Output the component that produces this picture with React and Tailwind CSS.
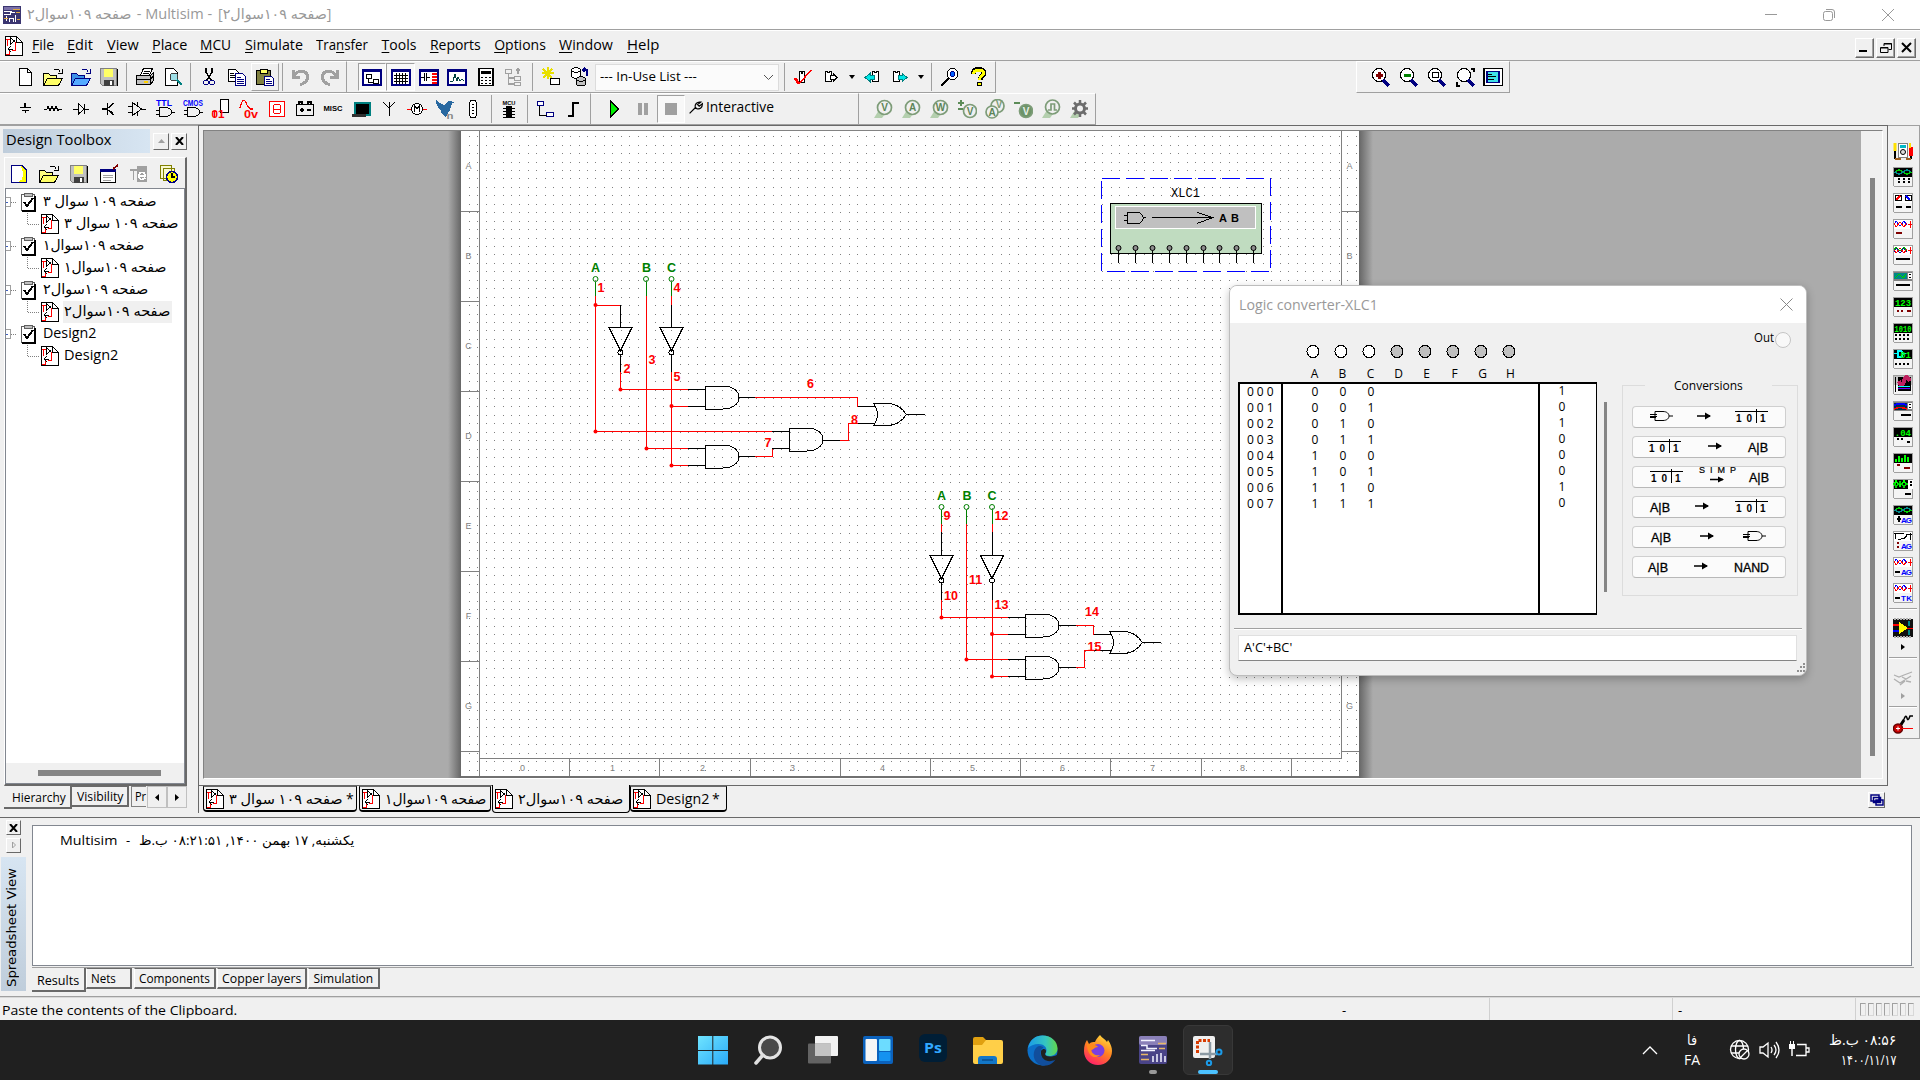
import React, { useLayoutEffect, useRef, useState } from "react";

const K = "#000", N = "#000080", R = "#f00", G = "#a0a0a0", Y = "#ffff00";

/* Text squeezed or stretched horizontally to a given width */
function T({ w, children, className = "", dir = "ltr" }) {
  const ref = useRef(null);
  const [s, setS] = useState(1);
  useLayoutEffect(() => {
    const n = ref.current.offsetWidth;
    if (n) setS(w / n);
  }, [w, children]);
  return (
    <span className={"inline-block shrink-0 whitespace-nowrap text-left " + className} style={{ width: w }} dir="ltr">
      <span ref={ref} dir={dir} className="inline-block origin-left whitespace-pre" style={{ transform: `scaleX(${s})` }}>
        {children}
      </span>
    </span>
  );
}

/* Icon from a list of [path, stroke, fill, strokeWidth] */
function Ic({ d, t, s = 20, smooth, className = "" }) {
  return (
    <svg width={s} height={s} viewBox="0 0 20 20" overflow="visible" className={"shrink-0 overflow-visible " + className} shapeRendering={smooth ? "auto" : "crispEdges"}>
      {d.map(([p, st, f, sw], i) => (
        <path key={i} d={p} stroke={st || "none"} fill={f || "none"} strokeWidth={sw || 1} />
      ))}
      {(t || []).map(([x, y, sz, c, v, len], i) => (
        <text key={i} x={x} y={y} fontSize={sz} fill={c} fontFamily="Liberation Sans" fontWeight="bold" textAnchor="middle" textLength={len} lengthAdjust="spacingAndGlyphs">{v}</text>
      ))}
    </svg>
  );
}

const circ = (x, y, r) => `M${x - r} ${y}a${r} ${r} 0 1 0 ${2 * r} 0a${r} ${r} 0 1 0 ${-2 * r} 0`;

const A = {
  newf: [["M4.5 1.5h8l4 4v13h-12z", K, "#fff"], ["M12.5 1.5v4h4", K]],
  open: [["M.5 18.5V6.5h5l2 2h6v3", K, "#ffff80"], ["M.5 18.5l4-7h15l-4 7z", K, "#ffff66"], ["M11 3c3-2 5-1 6 2m2-3v4h-4", K]],
  openb: [["M.5 18.5V6.5h5l2 2h6v3", N, "#3c90e8"], ["M.5 18.5l4-7h15l-4 7z", N, "#55aaff"], ["M11 3c3-2 5-1 6 2m2-3v4h-4", N]],
  save: [["M1.5 1.5h16v17h-14l-2-2z", "#808080", "#c0c0c0"], ["M5 2h9v8h-9z", "", "#ffff66"], ["M5 13h10v6h-10z", "", "#404040"], ["M11 14h2v4h-2z", "", "#fff"], ["M18.5 2v17", K]],
  print: [["M5.5 8l3-6.5h9l-3 6.5", K, "#fff"], ["M9 4h6M8 6h6", K], ["M1.5 8.5h14l3-3v8l-3 4h-14z", K, "#c0c0c0"], ["M1.5 12.5h14v-4m0 9v-5l3-4", K], ["M9 14h4v2h-4z", "", "#ffd000"]],
  prev: [["M2.5 1.5h8l4 4v13h-12z", K, "#fff"], [circ(11, 10, 4), "#404040", "#9fe0e8"], ["M14 13l5 5", "#008080", "", 2.5]],
  cut: [["M7 1v4l5 8M13 1v4l-5 8", K, "", 1.5], [circ(7, 15.5, 2.5), N, ""], [circ(13, 15.5, 2.5), N, ""]],
  copy: [["M1.5 2.5h7l3 3v9h-10z", K, "#fff"], ["M3 6h4M3 8h6M3 10h6", K], ["M8.5 6.5h7l3 3v9h-10z", N, "#fff"], ["M10 10h4M10 12h7M10 14h7M10 16h7", N]],
  paste: [["M1.5 3.5h14v14h-14z", K, "#808040"], ["M5 2h7v4h-7z", K, "#ffff66"], ["M9.5 9.5h7l2 2v7h-9z", N, "#fff"], ["M11 12h4M11 14h6M11 16h6", N]],
  undo: [["M2 3v7h7M3 9c3-6 10-6 13-2c2 5-1 9-7 11", G, "", 3]],
  redo: [["M18 3v7h-7M17 9c-3-6-10-6-13-2c-2 5 1 9 7 11", G, "", 3]],
  w1: [["M1 2.5h18v15h-18z", N, "#fff", 2], ["M0 2h20v3h-20z", "", N], ["M4.5 7.5h5v4h-5zM11.5 12.5h5v4h-5zM6.500 12v3h4", K]],
  w2: [["M1 2.5h18v15h-18z", N, "#fff", 2], ["M0 2h20v3h-20z", "", N], ["M3 8.500h14M3 11.500h14M3 14.500h14M5.500 6v11M8.500 6v11M11.500 6v11M14.500 6v11", K]],
  w3: [["M1 2.5h18v15h-18z", N, "#fff", 2], ["M0 2h20v3h-20z", "", N], ["M2 10h3M5.500 6v8M7.500 6v8M8 10h3", K], ["M13 7h5M13 10h5M13 13h5M13 16h5", R, "", 2]],
  w4: [["M1 2.5h18v15h-18z", N, "#fff", 2], ["M0 2h20v3h-20z", "", N], ["M3 14h3l2-7l2 7l1-4l2 4l2-2l2 2", "#004040"]],
  calc: [["M3 1.500h14v17h-14z", K, "#fff", 1.500], ["M5 4h10v3h-10z", "", K], ["M5 10h2M9 10h2M13 10h2M5 13h2M9 13h2M13 13h2M5 16h2M9 16h2M13 16h2", K, "", 1]],
  hier: [["M1.5 2.500h6v4h-6zM10.500 9.500h6v4h-6zM10.500 15.500h6v3h-6zM4.500 7v10h6M4.500 11h6M14 7v-5M12 4l2-2l2 2", G, "", 1.5]],
  star: [["M7 0v12M1 6h12M2 2l9 9M11 2l-9 9", "#e8e000", "", 1.5], ["M9.500 11.500h9v6h-9z", K, "#fff", 1.5]],
  db: [["M2.500 3v6c0 3 9 3 9 0V3c0-3-9-3-9 0c0 3 9 3 9 0", K, "#fff"], ["M7.500 12v5c0 2 9 2 9 0v-5c0-3-9-3-9 0c0 3 9 3 9 0", K, "#c0c0c0"], ["M18 9V3h-4M16 1l-2 2l2 2", N, "", 1.5]],
  chk: [["M6.500 4v11h5V4h-2v2h-1V4h-2z", K, "#fff"], ["M2 11l4 6", R, "", 3], ["M6 17L18 3", R, "", 1.5]],
  x1: [["M3.500 4.500h2v1h2v-1h2v10h-6z", K, "#fff"], ["M8 8.500h3v-2l4 4l-4 4v-2h-3z", K, "#fff"]],
  x2: [["M10.500 4.500h2v1h2v-1h2v10h-6z", K, "#fff"], ["M12 8.500h-4v-2l-5 4l5 4v-2h4z", "#008080", "#00e8e8"]],
  x3: [["M3.500 4.500h2v1h2v-1h2v10h-6z", K, "#fff"], ["M8 8.500h4v-2l5 4l-5 4v-2h-4z", "#008080", "#00e8e8"]],
  find: [["M1 19l8-8", K, "", 2], [circ(12.5, 7, 5.5), K, "#fff"], [circ(12.5, 7, 2.5), N, "#0060ff"]],
  help: [["M5 7c0-6 11-6 11-1c0 3-4 3-4 7", K, "", 5], ["M5.500 7c0-5 10-5 10-1c0 3-4 3-4 7", Y, "", 3], ["M9.500 15.500h4v3h-4z", K, Y]],
  zin: [[circ(8, 8, 6.5), K, "#fff"], ["M12 13l6 6", N, "", 3], ["M8 4.500v7M4.500 8h7", "#800000", "", 3]],
  zout: [[circ(8, 8, 6.5), K, "#fff"], ["M12 13l6 6", N, "", 3], ["M4.500 8h7", "#008000", "", 3]],
  zar: [[circ(8, 8, 6.5), K, "#fff"], ["M12 13l6 6", N, "", 3], ["M5 5.500h6v5h-6z", K]],
  zfit: [[circ(9, 8, 6.5), K, "#fff"], ["M13 13l6 6", N, "", 3], ["M16 1.500h3v3M1.500 15v4h3", K, "", 2]],
  full: [["M.8 1.500h18.500v17h-18.500z", K, "#fff", 1.5], ["M4 4.500h12v11h-12z", N, "#40e0e8", 1.5], ["M5 7h4M5 9.500h8M5 12h6", K]],
  gnd: [["M10 4v4M10.500 11v3", K, "", 1.3], ["M5 8.500h11M7 11.500h7", K]],
  res: [["M1 10h3l1-3l2 5l2-5l2 5l2-5l2 5l1-2h3", K]],
  dio: [["M2 10h5M7.500 5v10l6-5zM13.500 5v10M14 10h4", K]],
  trn: [["M3 10h5M8.500 4v12M9 9l6-5M9 11l6 5M12 12l2 3", K, "", 1.2]],
  amp: [["M1 7h4M1 13h4M5.500 3.500v13l9-6.500zM14 10h5M10 3v4M10 13v4", K]],
  ttl: [["M4.500 8.500h6c8 0 8 9 0 9h-6zM1 11h3M1 15h3M16 13h4", K]],
  mix: [["M9.500.500h8v13h-8z", K, "#fff"], ["M3.500 13v6M0.500 12.500h5", R]],
  ana: [["M1 9c2-10 5-9 7-3l3 4h3", R, "", 1.300]],
  ind: [["M2.500 2.500h15v15h-15z", R, "#fff"], ["M7 5.500h6M7 10h6M7 14.500h6M6.500 6v8M13.500 6v8", R, "", 1]],
  bat: [["M1.500 5.500h17v11h-17zM4 5v-2h3v2M13 5v-2h3v2M5 11h4M7 9v4M12 11h4", K, "", 1.300]],
  adv: [["M4 3.500h15v12h-15z", "#008080", K, 2], ["M1 14.500h14v3h-14z", "", "#303030"]],
  ant: [["M10 17V9L4 3M10 9l6-6M10 3v6", K]],
  mot: [[circ(10, 10, 5.500), K, "#fff"], ["M0 10h4M16 10h4", R], ["M7.500 13V7l2.500 3l2.500-3v6", K, "", 1.3]],
  ni: [["M1 1c3 3 5 3 8 5l4-4l7 1c-4 1-4 5-5 7c0 4-4 4-4 9c-2-3-5-4-5-8c-3-1-5-6-5-10z", "", "#2868a0"]],
  conn: [["M6.500 5c0-5 7-5 7 0v10c0 5-7 5-7 0z", K, "#fff"], ["M9 5h2M9 8h2M9 11h2M9 14h2", K]],
  mcu: [["M7 7h6v12h-6z", "", K], ["M4 9h12M4 12h12M4 15h12M4 18h12", K]],
  hb: [["M2.500 2.500h6v4h-6zM11.500 13.500h7v4h-7z", N, "#fff", 1.500], ["M4.500 7v9h7", K, "", 1]],
  bus: [["M5 17h5V4h6", K, "", 2]],
  play: [["M5.500 2v16l8-8z", K, "#00f000"]],
  pause: [["M5 4h3.500v12h-3.500zM11 4h3.500v12h-3.500z", "", G]],
  stop: [["M4 4h12v12h-12z", "", G]],
  wr: [["M2 18l8-8M9 11c-1-4 2-8 7-7l-4 3l2 2l4-3c0 5-3 7-7 6z", K, "", 1.5]],
  sch: [["M1.500.500h11l6 6v13h-17z", K, "#fff", 1.3], ["M12.500 1v5.500h6", K], ["M2 3.500h4M3.500 4v6M2 18.500h3v-5M11.500 6v8h-4", R], ["M6.500 2v6l4-3zM7 10l-3 3l3 3M5 13h4", K]],
  clip: [["M3.500 2.500h13v16h-13z", "#606060", "#fff", 1.500], ["M6 1h8v3h-8z", "#606060", "#c0c0c0"], ["M17 4v15H4", K, "", 1.5], ["M6 10l3 4l6-8", K, "", 2]],
  dt1: [["M2.500 1.500h10l5 5v12h-15z", N, "#fff", 1.500], ["M12 2l5 5v11h-8c6-2 6-8 3-16", "", Y], ["M3 3h9v13h-9z", "", "#fff"]],
  dt4: [["M1.500 5.500h15v13h-15z", K, "#fff"], ["M1 5h16v3h-16z", "", N], ["M4 11h10M4 13.500h10M4 16h8", G], ["M14 5l5-4", "#800000", "", 2]],
  dt5: [["M8 2h10v16h-10z", "", G], ["M1 6h7M4.500 6v10", G, "", 1.500], ["M10 12h6c0-5-6-5-6 0c0 4 4 4 6 2", "#fff", "", 1.500]],
  dt6: [["M1.500 1.500h11v13h-11zM4.500 4.500h11v12h-11z", "#808000", "#f8f8d0"], [circ(13, 13, 5.500), N, Y, 1.5], ["M13 9v4h3", K, "", 1.300]],
};
const LET = {
  ttl: [[9, 7, 9, "#00f", "TTL", 16]],
  cmos: [[10, 7, 9, "#00f", "CMOS", 20]],
  mix: [[7, 19, 11, R, "01", 13]],
  ana: [[12, 19, 10, R, "0v", 14]],
  misc: [[10, 12, 7, K, "MISC", 19]],
  mcu: [[10, 6, 6, K, "MCU", 13]],
  ni: [[15, 20, 9, "#888", "n", 7]],
};

function Cell({ n, on, w = "w-[28px]", down }) {
  return (
    <div className={w + " flex h-7 shrink-0 items-center justify-center " + (on ? "border border-[#a0a0a0] border-r-white border-b-white bg-[#f8f8f8]" : down ? "border border-white border-r-[#a0a0a0] border-b-[#a0a0a0]" : "")}>
      <Ic d={A[n] || []} t={LET[n]} />
    </div>
  );
}
const Sep = ({ w = "w-2" }) => (
  <div className={w + " flex h-7 shrink-0 justify-center"}><div className="h-full w-px bg-[#a0a0a0]" /></div>
);
const Dn = () => (
  <div className="flex w-3 justify-center"><svg width="6" height="4"><path d="M0 0h6L3 4z" fill="#000" /></svg></div>
);

const MENU = [["F", "ile", 22], ["E", "dit", 26], ["V", "iew", 32], ["P", "lace", 35], ["M", "CU", 31.500], ["S", "imulate", 58], ["Tra", "n", 52, "sfer"], ["T", "ools", 35], ["R", "eports", 51], ["O", "ptions", 52], ["W", "indow", 54], ["H", "elp", 32]];

function Title() {
  return (
    <div className="flex h-[30px] shrink-0 items-center border-b border-[#a0a0a0] bg-white pl-[3px] text-[#999]">
      <svg width="18" height="18" viewBox="0 0 18 18" shapeRendering="crispEdges">
        <rect width="18" height="18" rx="1" fill="#3a3570" />
        <path d="M1 1h16v3H1z" fill="#7a70a8" />
        <path d="M1 5h8M1 8h6v-2h5M3 15v-5M6 16v-4h4v4M12 16V9" stroke="#fff" fill="none" />
        <path d="M10 3h7M13 6h4M1 12h4M14 13h3" stroke="#e0a840" fill="none" />
      </svg>
      <div className="flex items-center pl-[6px] pb-px text-sm">
        <T w={104} dir="rtl">صفحه ۱۰۹سوال۲</T>
        <T w={83} className="ml-0.5">{" - Multisim - "}</T>
        <T w={113} className="ml-0.5" dir="rtl">[صفحه ۱۰۹سوال۲]</T>
      </div>
      <div className="ml-auto flex w-[155px] items-center">
        <svg width="155" height="28" viewBox="0 0 155 28" fill="none" stroke="#999">
          <path d="M0 13.500h12" />
          <path d="M58.500 12.500q0-2 2-2h5q2 0 2 2v5q0 2-2 2h-5q-2 0-2-2zM61 8.500h6q2.500 0 2.500 2.500v6" />
          <path d="M117 8l12 12M129 8l-12 12" />
        </svg>
      </div>
    </div>
  );
}

function Menu() {
  const b = "flex h-5 w-[19px] items-center justify-center border border-white border-r-[#696969] border-b-[#696969] shadow-[inset_-1px_-1px_0_#a0a0a0]";
  return (
    <div className="flex h-[31px] shrink-0 items-center border-t border-b border-t-white border-b-[#a0a0a0] pl-1 pr-[4px] text-sm text-black">
      <Ic d={A.sch} className="mr-2" />
      <div className="flex gap-[13.300px] pb-[2px]">
        {MENU.map(([a, c, w, z]) => (
          <T key={a + c} w={w}>{z ? <>{a}<u className="underline-offset-2">{c}</u>{z}</> : <><u className="underline-offset-2">{a}</u>{c}</>}</T>
        ))}
      </div>
      <div className="ml-auto flex gap-[2px] pt-1">
        <div className={b}><svg width="11" height="11"><path d="M0 9h8" stroke="#000" strokeWidth="2" /></svg></div>
        <div className={b}><svg width="12" height="12" fill="none" stroke="#000"><path d="M4 4V1.500h7.500v6H8.500M.5 5.500h7.500v5H.5zM4 2h8M1 6h7" /></svg></div>
        <div className={b}><svg width="11" height="11"><path d="M1 1l9 9M10 1l-9 9" stroke="#000" strokeWidth="2" /></svg></div>
      </div>
    </div>
  );
}

const M = "w-[28.4px]";
function Toolbars() {
  const grp = "flex items-center border-t border-r border-b border-t-white border-[#a0a0a0]";
  return (
    <>
      <div className="flex h-8 shrink-0">
        <div className={grp + " w-[347px] pl-[11px]"}>
          {["newf", "open", "openb", "save"].map((n) => <Cell key={n} n={n} />)}
          <Sep w="w-[7.5px]" />
          <Cell n="print" /><Cell n="prev" /><Sep />
          <Cell n="cut" /><Cell n="copy" /><Cell n="paste" down /><Sep />
          <Cell n="undo" /><Cell n="redo" />
        </div>
        <div className={grp + " w-[649px] pl-[11px]"}>
          <Cell n="w1" w={M} on /><Cell n="w2" w={M} on /><Cell n="w3" w={M} /><Cell n="w4" w={M} /><Cell n="calc" w={M} /><Cell n="hier" w={M} />
          <Sep /><Cell n="star" w={M} /><Cell n="db" w={M} />
          <div className="ml-[2px] flex h-[27px] w-[184px] shrink-0 items-center justify-between border border-[#dcdcdc] bg-[#fbfbfb] px-1 text-[13px]">
            <T w={97}>--- In-Use List ---</T>
            <svg width="11" height="7"><path d="M1 1l4.500 4.500L10 1" stroke="#555" fill="none" /></svg>
          </div>
          <Sep w="w-[10px]" />
          <Cell n="chk" w={M} /><Cell n="x1" w={M} /><Dn /><Cell n="x2" w={M} /><Cell n="x3" w={M} /><Dn />
          <Sep w="w-[9px]" /><Cell n="find" w={M} /><Cell n="help" w={M} />
        </div>
        <div className="ml-[360px] flex w-[154px] items-center border border-t-white border-l-white border-[#a0a0a0] pl-[10px]">
          {["zin", "zout", "zar", "zfit", "full"].map((n) => <Cell key={n} n={n} />)}
        </div>
      </div>
      <div className="flex h-8 shrink-0">
        <div className={grp + " w-[591px] pl-[11px]"}>
          {["gnd", "res", "dio", "trn", "amp", "ttl"].map((n) => <Cell key={n} n={n} />)}
          <div className="flex w-7 justify-center"><Ic d={A.ttl} t={LET.cmos} /></div>
          {["mix", "ana", "ind", "bat", "misc", "adv", "ant", "mot", "ni", "conn"].map((n) => <Cell key={n} n={n} />)}
          <Sep /><Cell n="mcu" /><Sep /><Cell n="hb" /><Cell n="bus" />
        </div>
        <div className={grp + " w-[268px] pl-[10px]"}>
          <Cell n="play" /><Cell n="pause" /><Cell n="stop" on />
          <Ic d={A.wr} s={16} smooth className="ml-[3px] mb-1" />
          <T w={68} className="mb-1 ml-[2px] text-sm">Interactive</T>
        </div>
        <div className={grp + " w-[237px] pl-[10px]"}>
          {["V", "A", "W", "±V", "AV", "-V", "п", "*"].map((c) => <div key={c} className="flex w-7 justify-center"><Probe c={c} /></div>)}
        </div>
      </div>
    </>
  );
}

function Probe({ c }) {
  const g = "#7d9c78";
  const txt = { fontSize: 10, fontFamily: "Liberation Sans", fontWeight: "bold", textAnchor: "middle" };
  return (
    <svg width="20" height="20" viewBox="0 0 20 20" fill="none" stroke={g} strokeWidth="1.7">
      {!(c === "±V" || c === "AV" || c === "-V") && <path d="M6 11l-5 8h8l3-4z" fill="#b4cfae" stroke="none" />}
      {c === "*" ? (
        <g stroke="#6c6c6c"><circle cx="11" cy="9.500" r="4.500" strokeWidth="3" /><path d="M11 1v17M3 9.500h16M5 3.500l12 12M17 3.500l-12 12" strokeWidth="2.500" /><circle cx="11" cy="9.500" r="3" fill="#f0f0f0" stroke="none" /></g>
      ) : c === "п" ? (
        <><circle cx="11.500" cy="8" r="7" fill="#f0f0f0" /><path d="M7 11h3V5h3.500v6h2.500" /></>
      ) : c === "AV" ? (
        <><circle cx="12.500" cy="7" r="6.500" fill="#f0f0f0" /><text x="14" y="9" {...txt} fill={g} stroke="none">V</text><circle cx="7" cy="13" r="6" fill="#f0f0f0" /><text x="7" y="16.500" {...txt} fill="#5c8458" stroke="none">A</text></>
      ) : c === "±V" ? (
        <><path d="M1 4h6M4 1v6M1 10h5" stroke="#5c8c58" strokeWidth="2" /><circle cx="13" cy="12" r="6.500" fill="#f0f0f0" /><text x="13" y="15.500" {...txt} fill="#5c8458" stroke="none">V</text></>
      ) : c === "-V" ? (
        <><path d="M1 4h6" stroke="#5c8c58" strokeWidth="2" /><circle cx="13" cy="12" r="6.500" fill="#6d9468" /><text x="13" y="15.500" {...txt} fill="#e8f0e8" stroke="none">V</text></>
      ) : (
        <><circle cx="11.500" cy="8.500" r="7" fill="#f0f0f0" /><text x="11.500" y="12" {...txt} fill="#5c8458" stroke="none">{c}</text></>
      )}
    </svg>
  );
}

const TREE = [
  [0, "صفحه ۱۰۹ سوال ۳", 114], [1, "صفحه ۱۰۹ سوال ۳", 115],
  [0, "صفحه ۱۰۹سوال۱", 101], [1, "صفحه ۱۰۹سوال۱", 102],
  [0, "صفحه ۱۰۹سوال۲", 105], [1, "صفحه ۱۰۹سوال۲", 106],
  [0, "Design2", 53], [1, "Design2", 54],
];

function LeftPanel() {
  const btn = "flex h-[17px] w-4 items-center justify-center border border-white border-r-[#696969] border-b-[#696969]";
  return (
    <div className="flex w-[198px] shrink-0 flex-col border-t border-[#a0a0a0] pt-[3px]">
      <div className="flex h-6 shrink-0 items-center pl-[3px]">
        <div className="flex h-6 w-[147px] items-center bg-linear-to-r from-[#bfcddb] to-[#d7e5f2] pb-[3px] pl-[3px] text-sm"><T w={105}>Design Toolbox</T></div>
        <div className={btn + " ml-[3px]"}><svg width="7" height="4"><path d="M0 4h7L3.500 0z" fill="#a0a0a0" /></svg></div>
        <div className={btn + " ml-[2px]"}><svg width="9" height="8"><path d="M1 0l7 8M8 0l-7 8" stroke="#000" strokeWidth="2" /></svg></div>
      </div>
      <div className="ml-1 mt-1 flex h-[629px] w-[183px] shrink-0 flex-col border border-white border-r-2 border-b-2 border-r-[#696969] border-b-[#696969]">
        <div className="flex h-[30px] shrink-0 items-end gap-[10px] pl-[4px] pb-[4px]">
          {["dt1", "open", "save", "dt4", "dt5", "dt6"].map((n) => <Ic key={n} d={A[n]} />)}
        </div>
        <div className="flex grow flex-col border border-[#828790] bg-white pt-[2px]">
          {TREE.map(([lv, s, w], i) => (
            <div key={i} className="flex h-[22px] shrink-0 items-center text-sm">
              {lv === 0 ? (
                <>
                  <svg width="12" height="22" className="shrink-0" shapeRendering="crispEdges"><path d="M0 6.500h4.500v9H0" stroke="#a0a0a0" fill="#fff" /><path d="M0 11.500h2" stroke="#4060c0" /><path d="M5 11.500h6" stroke="#808080" strokeDasharray="1 1" /></svg>
                  <Ic d={A.clip} className="mr-[4px]" />
                </>
              ) : (
                <>
                  <svg width="34" height="22" className="shrink-0" shapeRendering="crispEdges"><path d="M21.500 0v11.500h13" stroke="#808080" fill="none" strokeDasharray="1 1" /></svg>
                  <Ic d={A.sch} className="mr-[3px]" />
                </>
              )}
              <div className={"flex h-[22px] items-center pl-px pb-[3px] " + (i === 5 ? "w-[109px] bg-[#f0f0f0]" : "")}><T w={w} dir={i < 6 ? "rtl" : "ltr"}>{s}</T></div>
            </div>
          ))}
          <div className="mt-auto flex h-5 items-center bg-[#f0f0f0] pl-8"><div className="mb-px h-[6px] w-[123px] bg-[#858585]" /></div>
        </div>
      </div>
      <div className="flex pl-1 text-[13px]">
        <div className="flex h-[23px] w-[68px] items-center justify-center border-r-2 border-b-2 border-[#696969] pt-[3px] pl-[3px]"><T w={54}>Hierarchy</T></div>
        <div className="flex h-[21px] w-[57px] items-center justify-center border-t border-r-2 border-b-2 border-[#696969] pt-px"><T w={46}>Visibility</T></div>
        <div className="ml-[2px] flex h-[21px] w-[15px] items-center border-t border-l border-b border-[#808080] pl-[3px]"><T w={11}>Pr</T></div>
        <div className="ml-px flex h-[22px] w-5 items-center justify-center border border-[#c0c0c0]"><svg width="4" height="7"><path d="M4 0v7L0 3.500z" /></svg></div>
        <div className="flex h-[22px] w-5 items-center justify-center border border-[#c0c0c0]"><svg width="4" height="7"><path d="M0 0v7l4-3.500z" /></svg></div>
      </div>
    </div>
  );
}

/* Drawing sheet, in window coordinates */
let dots = "";
for (let i = -12; i < 96; i++) {
  const x = Math.round(561.7 + 8.446 * i);
  if (x < 462 || x > 1357) continue;
  for (let j = -13; j < 64; j++) {
    const y = Math.round(246 + 8.444 * j);
    if (y > 774) break;
    dots += `M${x} ${y}h1v1h-1z`;
  }
}
const and = (x, y) => `M${x} ${y}h17c22 0 22 23 0 23h-17z`;
const or = (x, y) => `M${x} ${y}h14c9 0 15 5 19 11c-4 6-10 11-19 11h-14c5-6 5-16 0-22`;
const inv = (x) => (y) => `M${x - 11.5} ${y}h23l-11.500 23zM${x - 2.5} ${y + 25}a2.500 2.500 0 1 0 5 0a2.500 2.500 0 1 0 -5 0`;
const LBL = [[601, 287.5, "1"], [677, 287.5, "4"], [652, 359.5, "3"], [627, 368.5, "2"], [677, 376.5, "5"], [810.5, 383, "6"], [768, 442.500, "7"], [854.5, 419, "8"], [947, 515, "9"], [1001.5, 515, "12"], [975.5, 579, "11"], [951, 595.500, "10"], [1001.5, 604, "13"], [1092, 611, "14"], [1094.500, 646.500, "15"]];

function Sheet() {
  return (
    <svg width="1657" height="647" viewBox="204 131 1657 647" className="block bg-[#ababab]" shapeRendering="crispEdges" fontFamily="Liberation Sans">
      <defs>
        <linearGradient id="sl"><stop offset="0" stopColor="#ababab" /><stop offset="1" stopColor="#666" /></linearGradient>
        <linearGradient id="sr"><stop offset="0" stopColor="#666" /><stop offset="1" stopColor="#ababab" /></linearGradient>
      </defs>
      <rect x="448" y="131" width="13" height="647" fill="url(#sl)" />
      <rect x="1359" y="131" width="14" height="647" fill="url(#sr)" />
      <rect x="461" y="776" width="898" height="2" fill="#707070" />
      <rect x="461" y="131" width="898" height="645" fill="#fff" />
      <path d={dots} fill="#808080" />
      <path d="M479.500 131v627.500h862V131" stroke="#808080" fill="none" />
      <g stroke="#808080">
        {[0, 1, 2, 3, 4, 5, 6].map((i) => <path key={i} d={`M461 ${211.5 + 90 * i}h18M1341 ${211.5 + 90 * i}h18`} />)}
        {[0, 1, 2, 3, 4, 5, 6, 7, 8, 9].map((i) => <path key={i} d={`M${479.500 + 90.2 * i} 758v18`} />)}
      </g>
      <g fontSize="9" fill="#808080" textAnchor="middle">
        {["A", "B", "C", "D", "E", "F", "G"].map((c, i) => <React.Fragment key={c}><text x="468.500" y={169 + 90 * i}>{c}</text><text x="1349.500" y={169 + 90 * i}>{c}</text></React.Fragment>)}
        {[0, 1, 2, 3, 4, 5, 6, 7, 8].map((i) => <text key={i} x={522.5 + 90 * i} y="770.500">{i}</text>)}
      </g>
      <g fill="none" stroke="#f00">
        <path d="M595.500 296v135.500H772M595.500 305.500h25.500M620.500 372v17.500H688M646.500 296v152.500H688M671.500 296v9M671.500 372v93.500H688M671.500 406.500H688M755 397.500h102.500v9M755 456.500h17.500v-8M840 440.500h8.500v-17h9" />
        <path d="M941.500 524v8M941.500 600v17.500H1008M966.500 524v135.500H1008M992.500 524v8M992.500 600v76.500H1008M992.500 634.500H1008M1076 625.500h17.500v9M1076 667.500h8.500v-17h9" />
      </g>
      <g fill="none" stroke="#000">
        <path d="M620.500 305v22M671.500 305v22M620.500 355v17M671.500 355v17M688 389.500h17M688 406.500h17M688 448.500h17M688 465.500h17M738 397.500h17M738 456.500h17M772 431.500h17M772 448.500h17M822 440.500h18M857.500 406.500h17M857.500 423.500h17M906 414.500h19" />
        <path d="M941.500 532v23M992.500 532v23M941.500 583v17M992.500 583v17M1008 617.500h17M1008 634.500h17M1008 659.500h17M1008 676.500h17M1058 625.500h18M1058 667.500h18M1093.500 634.500h17M1093.500 650.500h17M1142 642.500h19" />
        <path d={and(705.5, 386) + and(789.5, 428) + and(705.5, 445) + and(1025.5, 614) + and(1025.5, 656) + or(873.5, 403.5) + or(1109.5, 631.5) + inv(620.5)(327.5) + inv(671.5)(327.5) + inv(941.5)(555.5) + inv(992)(555.5)} />
      </g>
      <g fill="none" stroke="#008000">
        <path d="M595.500 282v14M646.500 282v14M671.500 282v14M941.500 510v14M966.500 510v14M992.500 510v14" />
        {[[595.5, 279], [646, 279], [671.5, 279], [941.5, 507], [966.5, 507], [992, 507]].map(([x, y]) => <circle key={x} cx={x} cy={y} r="2.5" shapeRendering="auto" />)}
      </g>
      <g fill="#f00" shapeRendering="auto">
        {[[595.5, 305], [595.5, 431.5], [620.5, 389.5], [646.5, 448.5], [671.5, 406], [671.500, 465.5], [941.500, 617.5], [966.5, 659.5], [992, 634], [992, 676.5]].map(([x, y]) => <circle key={x + "," + y} cx={x} cy={y} r="2" />)}
      </g>
      <g fontWeight="bold" fontSize="12.500" textAnchor="middle">
        <g fill="#008000">{[[595.5, 272, "A"], [646.5, 272, "B"], [671.5, 272, "C"], [941.5, 500, "A"], [967, 500, "B"], [992, 500, "C"]].map(([x, y, c]) => <text key={x} x={x} y={y}>{c}</text>)}</g>
        <g fill="#f00">{LBL.map(([x, y, c]) => <text key={c} x={x} y={y + 4.500}>{c}</text>)}</g>
      </g>
      <rect x="1101.5" y="178.5" width="169" height="93" fill="none" stroke="#00f" strokeDasharray="18 6" />
      <text x="1185.500" y="196.500" fontFamily="Liberation Mono" fontSize="12" textAnchor="middle" textLength="29">XLC1</text>
      <rect x="1110.5" y="203.5" width="151" height="50" fill="#c0dcc0" stroke="#000" />
      <rect x="1115.5" y="206.5" width="140" height="22" fill="#c0c0c0" stroke="#fff" />
      <path d="M1127.500 212.500h9c9 0 9 11 0 11h-9zM1124 215.500h3M1124 220.500h3M1143 217.500h3M1152 217.500h61M1197 212.500l16 5l-16 6" fill="none" stroke="#000" />
      <text x="1219" y="222" fontSize="11" fontWeight="bold" textLength="20">A B</text>
      {[0, 1, 2, 3, 4, 5, 6, 7, 8].map((i) => { const x = Math.round(1118 + 16.9 * i) + 0.5; return <g key={i} stroke="#000"><path d={`M${x} 250v13`} /><circle cx={x} cy="248" r="2.500" fill="#8c8c8c" shapeRendering="auto" /></g>; })}
    </svg>
  );
}

const GATE = <path d="M5 0.500h8c8 0 8 9 0 9H5zM0 3.500h7M0 5.500h7M0 6.500h6M19 5h4" />;
function Sym({ k, w }) {
  const body = {
    g: <g>{GATE}</g>,
    t: <g><path d="M0 .500h33M21.500 -2v14" /><text x="1" y="11" textLength="16" fill="#000" stroke="none" fontSize="10" fontWeight="bold">1 0</text><text x="25" y="11" fill="#000" stroke="none" fontSize="10" fontWeight="bold">1</text></g>,
    e: <g><text x="0" y="10.500" textLength="20" lengthAdjust="spacingAndGlyphs" fill="#000" strokeWidth=".3" fontSize="12">A|B</text></g>,
    n: <g><text x="0" y="10.500" textLength="35" lengthAdjust="spacingAndGlyphs" fill="#000" strokeWidth=".3" fontSize="12">NAND</text></g>,
    a: <g><path d="M0 5h13" strokeWidth="1.500" /><path d="M8 1.500l6 3.500l-6 3.500z" fill="#000" stroke="none" /></g>,
    s: <g><text x="-10" y="2" textLength="37" fill="#000" strokeWidth=".2" fontSize="9">SIMP</text><path d="M1 8.500h13" strokeWidth="1.500" /><path d="M9 5.500l6 3l-6 3z" fill="#000" stroke="none" /></g>,
  }[k];
  return <svg width={w} height="12" viewBox={`0 0 ${w} 12`} overflow="visible" fill="none" stroke="#000" fontFamily="Liberation Sans" className="shrink-0 overflow-visible">{body}</svg>;
}
const CONV = [
  ["g", "a", "t", "pl-[17px] pr-[17px]", 23, 14, 33],
  ["t", "a", "e", "pl-[15px] pr-[17px]", 34, 14, 20],
  ["t", "s", "e", "pl-[17px] pr-[16px]", 33, 14, 20],
  ["e", "a", "t", "pl-[17px] pr-[17px]", 19, 14, 33],
  ["e", "a", "g", "pl-[18px] pr-[19px]", 19, 14, 23],
  ["e", "a", "n", "pl-[15px] pr-[17px]", 19, 14, 34],
];
const OUT = [1, 0, 1, 0, 0, 0, 1, 0];

function Dialog() {
  return (
    <div className="absolute left-[1025px] top-[154px] flex h-[391px] w-[578px] flex-col overflow-hidden rounded-lg border border-[#bdbdbd] bg-[#f0f0f0] shadow-[0_3px_8px_rgba(0,0,0,.25)]">
      <div className="flex h-[37px] shrink-0 items-center justify-between bg-white pl-[9px] pr-[13px] text-sm text-[#999]">
        <T w={139}>Logic converter-XLC1</T>
        <svg width="13" height="13"><path d="M.5.500l12 12M12.500.500l-12 12" stroke="#888" /></svg>
      </div>
      <div className="flex h-[25px] shrink-0 items-end justify-end pr-[15px] text-xs">
        <T w={20} className="mb-[2px]">Out</T>
        <div className="ml-px h-4 w-4 rounded-full border border-[#c4c4c4] bg-[#f8f8f8]" />
      </div>
      <div className="flex">
        <div className="ml-2 w-[360px]">
          <div className="flex h-[34px] pl-[61px] text-[12px]">
            {["A", "B", "C", "D", "E", "F", "G", "H"].map((c, i) => (
              <div key={c} className="flex w-7 flex-col items-center">
                <svg width="14" height="14" shapeRendering="crispEdges" className="-mt-[4px] shrink-0"><circle cx="7" cy="7.500" r="6" stroke="#000" fill={i < 3 ? "#fff" : "#c0c0c0"} /></svg>
                <span className="mt-[8px] pl-[3px] leading-4">{c}</span>
              </div>
            ))}
          </div>
          <div className="flex h-[233px] w-[359px] border-2 border-r border-black bg-white text-[12px] leading-4">
            <div className="w-[43px] border-r-2 border-black pl-[7px]">
              {OUT.map((_, i) => <div key={i} className="tracking-[3px]">{"00" + i}</div>)}
            </div>
            <div className="w-[257px] border-r-2 border-black pl-[18px]">
              {OUT.map((_, i) => <div key={i} className="flex">{[4, 2, 1].map((b) => <span key={b} className="w-7 text-center">{i & b ? 1 : 0}</span>)}</div>)}
            </div>
            <div className="-mt-px w-[44px] text-center">{OUT.map((v, i) => <div key={i}>{v}</div>)}</div>
          </div>
        </div>
        <div className="ml-[6px] mt-[54px] h-[190px] w-[3px] bg-[#858585]" />
        <div className="relative ml-[15px] mt-[37px] flex h-[211px] w-[176px] flex-col gap-2 border border-[#dcdcdc] pl-[9px] pt-5">
          <div className="absolute -top-[8px] left-[22px] flex w-[127px] justify-center bg-[#f0f0f0] text-xs"><T w={69}>Conversions</T></div>
          {CONV.map(([a, b, c, pad, w1, w2, w3], i) => (
            <div key={i} className={pad + " flex h-[22px] w-[154px] items-center justify-between rounded border border-[#cfcfcf] border-b-[#b8b8b8] bg-[#fbfbfb]"}>
              <Sym k={a} w={w1} /><Sym k={b} w={w2} /><Sym k={c} w={w3} />
            </div>
          ))}
        </div>
      </div>
      <div className="mx-1 mt-[13px] h-[2px] shrink-0 border-t border-[#a0a0a0] bg-white" />
      <div className="ml-2 mt-[5px] flex h-[26px] w-[559px] shrink-0 items-center border border-[#e0e0e0] border-b-[#858585] bg-white pl-[5px] pb-px text-xs"><T w={48}>A'C'+BC'</T></div>
      <svg width="10" height="10" className="ml-auto mt-[2px] shrink-0" fill="#909090"><path d="M7 0h2v2h-2zM4 3h2v2h-2zM7 3h2v2h-2zM1 7h2v2h-2zM4 7h2v2h-2zM7 7h2v2h-2z" /></svg>
    </div>
  );
}

function DocTab({ s, w, cls, dir = "rtl", star, sel }) {
  return (
    <div className={cls + " flex shrink-0 items-center rounded-b-sm border-black text-sm " + (sel ? "h-[28px] border-x border-b pt-px" : "h-[26px] border border-b-2 border-t-[#696969]")}>
      <Ic d={A.sch} className="ml-px mr-1" />
      <T w={w} dir={dir}>{s}</T>
      {star && <span className="pl-[3px]">*</span>}
    </div>
  );
}

function Main() {
  return (
    <div className="flex w-[1690px] shrink-0 flex-col">
      <div className="flex h-[661px] shrink-0 border border-[#696969] pl-1 pt-1">
        <div className="flex h-[649px] w-[1680px] border-t border-l border-r border-b border-[#828282] border-r-white border-b-white">
          <div className="relative h-[647px] w-[1657px]"><Sheet /><Dialog /></div>
          <div className="flex grow flex-col items-center bg-[#f0f0f0] pr-px pl-[2px] pt-[47px]"><div className="h-[578px] w-[5px] bg-[#858585]" /></div>
        </div>
      </div>
      <div className="flex h-[27px] border-l border-[#696969] pl-[4px]">
        <DocTab s="صفحه ۱۰۹ سوال ۳" w={114} star cls="w-[154px]" />
        <DocTab s="صفحه ۱۰۹سوال۱" w={101} cls="ml-[2px] w-[132px]" />
        <DocTab s="صفحه ۱۰۹سوال۲" w={105} sel cls="-mt-px ml-px w-[138px] bg-[#f0f0f0]" />
        <DocTab s="Design2" w={53} star dir="ltr" cls="w-[97px]" />
        <div className="ml-auto mr-[3px] mt-[6px] flex h-4 w-[17px] items-center justify-center border border-white border-r-[#696969] border-b-[#696969]">
          <svg width="14" height="12" fill="#f0f0f0" stroke={N} strokeWidth="1.5"><path d="M1 1h8v6H1zM3.500 3.500h7v5h-7zM6 6h7v5H6z" /></svg>
        </div>
      </div>
    </div>
  );
}

/* screen colour, waves, pin marks, caption, digits */
const INST = [
  ["#000", [["M2 5q4-4 8 0t8 0", "#0c0", 1.5], ["M2 5q4 4 8 0t8 0", "#088", 1.5]], "M5 12h2M10 12h2M15 12h2M5 15h2M10 15h2M15 15h2", ""],
  ["#fff", [["M2.500 2.500h6v5H2.500zM12.500 2.500h6v5h-6z", K], ["M3 7l4-4", R, 1.500], ["M17 7l-4-4", "#00f", 1.500]], "M3 14h6M13 14h5", ""],
  ["#fff", [["M1 6l2-4l4 5l4-5l3 4", "#00f"], ["M1 4l2 4l4-5l4 5l3-4", R], ["M17 2v7M15 5h4", R]], "M3 14h6", ""],
  ["#fff", [["M1 7l2-4l4 5l4-5l3 4", "#00a"], ["M1 4l2 4l4-5l4 5l3-4", R], ["M1 5l2-3l4 4l4-4l3 4", "#0a0"], ["M17 2v7M15 5h4", R]], "M3 14h14", ""],
  ["#808080", [["M1 5h13", "#088", 6], ["M2 7l4-4l4 4l3-4", "#0c0"], ["M17 2v6", "#fff", 4], ["M16 3h2M16 6h2", K]], "M3 14h14", ""],
  ["#000", [], "M4 14h2M8 14h2M14 14h4", "", "123"],
  ["#000", [], "M2 12h2M6 12h2M10 12h2M14 12h2M2 16h2M6 16h2M10 16h2M14 16h2", "", "1010"],
  ["#000", [["M1 4.500h4M5 2h3q4 3 0 6H5zM10 4.500h3", "#0ff", 1.500]], "M2 15h2M6 15h2M10 15h2M14 15h2", "", "  01"],
  ["#c0c0c0", [["M2.500 2v15", K, 1], ["M5 9h13", K, 14], ["M6 6q3 8 5 0t6 0", "#c02060", 4], ["M5 11h12", "#0ff"], ["M5 13h12", "#60f"]], "", ""],
  ["#808080", [["M1 5h13", "#00304a", 7], ["M1 4q6-2 13 0", "#00f", 2], ["M1 8q6-3 13 0", R, 1.5], ["M17 2v6", "#fff", 4], ["M16 3h2M16 6h2", K]], "M8 14h10", ""],
  ["#000", [], "M4 12h2M8 12h2M14 15h3", "", "  .04"],
  ["#000", [["M3 9V6M6 9V3M9 9V5M12 9V2M15 9V4", "#0f0", 2]], "M4 12h3M11 15h6", ""],
  ["#000", [["M1 6l2-4l4 5l4-5l3 4", "#0f0", 1.5], ["M1 4l2 4l4-5l4 5l3-4", "#0c0", 1.5], ["M17 1v9", "#fff", 5]], "M12 15h6M17 3h2M17 6h2", ""],
  ["#000", [["M2 5q4-4 8 0t8 0", "#0c0", 1.5], ["M2 5q4 4 8 0t8 0", "#088", 1.5]], "M4 14h4M6 11v6", "AG"],
  ["#fff", [["M1 2h10M2 2v6M5 8h3q5 0 6-5h5M17 2v7", K]], "M4 12h2M4 16h2", "AG"],
  ["#fff", [["M1 6l2-4l4 5l4-5l3 4", "#00f"], ["M1 4l2 4l4-5l4 5l3-4", R], ["M17 2v7M15 5h4", R]], "M2 15h5", "AG"],
  ["#fff", [["M1 6l2-4l4 5l4-5l3 4", "#00f"], ["M1 4l2 4l4-5l4 5l3-4", R], ["M17 2v7M15 5h4", R]], "M2 15h5", "TK"],
];

function Instruments() {
  const line = <div className="h-[2px] w-7 border-t border-[#a0a0a0] bg-white" />;
  return (
    <div className="flex w-8 shrink-0 flex-col">
      <div className="flex h-[614px] flex-col items-center border-t border-r border-b border-[#a0a0a0] pr-px pt-3">
        <svg width="20" height="26" viewBox="0 0 20 26" className="shrink-0"><path d="M2 9v12M18 9v12" stroke={K} strokeWidth="2" /><path d="M2 5v8" stroke="#ffe000" strokeWidth="3" /><path d="M18 9v9" stroke={R} strokeWidth="4" /><path d="M17 5v5" stroke="#ffe000" strokeWidth="2" /><rect x="5.500" y="5.500" width="9" height="14" fill="#fff" stroke="#808080" /><path d="M7 7h6v3H7z" fill="#00b8c8" /><circle cx="10" cy="14" r="2.500" stroke="#000" fill="#ddd" /><path d="M2 21h6M13 21h5" stroke="#a06020" strokeWidth="2" /></svg>
        {INST.map(([bg, wv, pins, cap, num], i) => (
          <svg key={i} width="20" height="26" viewBox="0 -3 20 26" shapeRendering="crispEdges" className="shrink-0">
            <rect width="20" height="19" fill="#f4f4f4" />
            <path d="M19.500 1v18H1" stroke="#a0a0a0" fill="none" /><path d="M.5 19V.500H20" stroke="#a0a0a0" fill="none" />
            <rect x="1" y="1" width="18" height="9" fill={bg} />
            {wv.map(([d, c, w], j) => <path key={j} d={d} stroke={c} strokeWidth={w || 1} fill="none" />)}
            {num && <text x={num[0] === " " ? 18 : 10} y="9" fontSize="9" fontFamily="Liberation Mono" fontWeight="bold" fill="#0f0" textAnchor={num[0] === " " ? "end" : "middle"} textLength={num.length > 3 && num[0] !== " " ? 17 : undefined} lengthAdjust="spacingAndGlyphs">{num.trim()}</text>}
            <path d={pins} stroke={i % 3 === 2 ? "#800000" : K} strokeWidth="2" />
            {cap && <text x="8" y="18" fontSize="8" fontFamily="Liberation Sans" fontWeight="bold" fill="#00f" textLength="11">{cap}</text>}
          </svg>
        ))}
        <div className="mt-[2px]">{line}</div>
        <svg width="20" height="20" viewBox="0 0 20 20" className="mt-2 shrink-0" shapeRendering="crispEdges"><rect y="1" width="20" height="18" fill="#101010" /><path d="M1 1h18M1 19h18" stroke="#b0b0b0" strokeDasharray="2 1" strokeWidth="2" /><path d="M0 7h6" stroke={R} strokeWidth="2" /><path d="M0 13h6" stroke="#00f" strokeWidth="2" /><path d="M13 10h7" stroke={R} /><path d="M6 4v12l9-6z" fill={Y} /><path d="M16 3v5M16 12v5" stroke="#088" strokeWidth="2" /></svg>
        <svg width="4" height="7" className="mt-[6px] shrink-0"><path d="M0 0v6l4-3z" /></svg>
        <div className="mt-[6px]">{line}</div>
        <svg width="20" height="16" viewBox="0 0 20 16" className="mt-3 shrink-0" fill="none" stroke="#b0b0b0"><path d="M1 4l5 2l5-2l8-3M1 8l6 4l11-7M7 14l5-4M9 6l4 2M13 10l5 1" strokeWidth="1.300" /></svg>
        <svg width="4" height="7" className="mt-[6px] shrink-0"><path d="M0 0v6l4-3z" fill="#a0a0a0" /></svg>
        <div className="mt-[6px]">{line}</div>
        <svg width="20" height="20" viewBox="0 0 20 20" className="mt-[6px] shrink-0" fill="none"><path d="M8 12l3-7q2-5 3-1t3-2h3" stroke="#000" strokeWidth="1.500" /><path d="M7 12l4-6" stroke="#000" strokeWidth="3" /><circle cx="5" cy="14.500" r="4.500" fill="#c00" stroke="#600" strokeWidth="1.500" /><path d="M3 14.500h4M5 12.500v4" stroke="#fff" /><path d="M9 14.500h11" stroke={R} /></svg>
      </div>
    </div>
  );
}

function Spreadsheet() {
  const tab = "flex h-[21px] items-center justify-center border border-b-2 border-r-2 border-t-[#696969] border-l-white border-[#696969] pt-px";
  const btn = "flex h-[15px] w-[15px] shrink-0 items-center justify-center border border-white border-r-[#696969] border-b-[#696969]";
  return (
    <div className="flex h-[180px] shrink-0 border-t border-b border-t-[#696969] border-b-[#a0a0a0]">
      <div className="flex w-8 shrink-0 flex-col items-center pr-[5px] pt-[2px]">
        <div className={btn}><svg width="9" height="8"><path d="M1 0l7 8M8 0l-7 8" stroke="#000" strokeWidth="2" /></svg></div>
        <div className={btn + " mt-[3px]"}><svg width="4" height="7"><path d="M.5 0v6l3-3z" stroke="#a0a0a0" fill="none" /></svg></div>
        <div className="mt-1 flex h-[134px] w-[25px] shrink-0 items-end justify-center bg-linear-to-b from-[#d7e5f2] to-[#bfcddb] pr-1 pb-1">
          <div className="h-[119px] w-[14px]">
            <div className="h-[14px] w-[119px] origin-top-left translate-y-[119px] -rotate-90 font-[DejaVu_Sans] text-[12px] leading-[14px]"><T w={119}>Spreadsheet View</T></div>
          </div>
        </div>
      </div>
      <div className="flex flex-col pt-[7px]">
        <div className="flex h-[141px] w-[1880px] items-start border border-[#828790] bg-white pl-[27px] pt-[4px] text-[13px] leading-5">
          <T w={57}>Multisim</T><span className="w-[22px] text-center">-</span>
          <T w={215} dir="rtl">یکشنبه, ۱۷ بهمن ۱۴۰۰, ۰۸:۲۱:۵۱ ب.ظ</T>
        </div>
        <div className="mt-px flex w-[1882px] border-t border-[#a0a0a0] text-xs">
          <div className="flex h-[24px] w-[54px] items-center justify-center border-b-2 border-r-2 border-[#696969] pt-1"><T w={42}>Results</T></div>
          <div className={tab + " w-[46px] !justify-start pl-1"}><T w={25}>Nets</T></div>
          <div className={tab + " ml-[2px] w-[82px]"}><T w={71}>Components</T></div>
          <div className={tab + " ml-px w-[90px]"}><T w={79}>Copper layers</T></div>
          <div className={tab + " ml-px w-[72px]"}><T w={60}>Simulation</T></div>
        </div>
      </div>
    </div>
  );
}

function Status() {
  return (
    <div className="flex h-[23px] shrink-0 items-stretch border-t border-[#d8d8d8] pl-[2px] text-[13px]">
      <div className="flex w-[1337px] items-center pt-1"><T w={235}>Paste the contents of the Clipboard.</T></div>
      <div className="flex w-[151px] items-center border-r border-[#d0d0d0] pl-[3px] pt-1">-</div>
      <div className="w-[183px] border-r border-[#d0d0d0]" />
      <div className="flex w-[183px] items-center border-r border-[#d0d0d0] pl-[5px] pt-1">-</div>
      <div className="flex items-center gap-[2px] pl-1 pt-px">
        {[0, 1, 2, 3, 4, 5, 6].map((i) => <div key={i} className="h-[13px] w-[6px] border border-t-[#a0a0a0] border-l-[#a0a0a0] border-r-[#d8d8d8] border-b-[#d8d8d8]" />)}
      </div>
    </div>
  );
}

function Taskbar() {
  const c = "flex w-[55px] shrink-0 items-center justify-center relative";
  return (
    <div className="flex h-[60px] shrink-0 bg-[#202020] pl-[685px] text-white">
      <div className={c}><svg width="30" height="30" viewBox="0 0 30 30"><defs><linearGradient id="wg" x1="0" y1="0" x2="1" y2="1" gradientUnits="objectBoundingBox"><stop offset="0" stopColor="#6fe4ff" /><stop offset="1" stopColor="#2aaaf8" /></linearGradient></defs><path d="M0 1h14.300v14H0zM15.300 1H30v14H15.300zM0 16h14.300v13.500H0zM15.300 16H30v13.500H15.300z" fill="url(#wg)" /></svg></div>
      <div className={c}><svg width="30" height="30" viewBox="0 0 30 30"><circle cx="17" cy="12.500" r="10.500" fill="#4a4a4a" stroke="#e4e4e4" strokeWidth="3" /><path d="M10 20l-7 8" stroke="#e0e0e0" strokeWidth="3.500" strokeLinecap="round" /></svg></div>
      <div className={c}><svg width="30" height="30" viewBox="0 0 30 30"><rect x="7" y="1" width="23" height="20" rx="1" fill="#f2f2f2" /><rect y="8.500" width="23" height="20" rx="1" fill="#707070" opacity=".85" /><path d="M7 8.500h16V21H7z" fill="#c4c4c4" /></svg></div>
      <div className={c}><svg width="30" height="30" viewBox="0 0 30 30"><rect y="1" width="30" height="28" rx="2" fill="#0b62bd" /><rect x="2.500" y="4" width="11.500" height="22" rx="1" fill="#f6f6f6" /><rect x="16" y="4" width="11.500" height="12" rx="1" fill="#6cdcff" /><rect x="16" y="17" width="11.500" height="9" rx="1" fill="#1492f0" /></svg></div>
      <div className={c}><div className="mb-1 flex h-7 w-7 items-center justify-center rounded-md bg-[#001e36] pb-px font-[Open_Sans] text-[15px] font-bold text-[#31a8ff]"><T w={18}>Ps</T></div></div>
      <div className={c}><svg width="30" height="30" viewBox="0 0 30 30"><path d="M0 4q0-2 2-2h8l3 3v8H0z" fill="#e0a010" /><path d="M0 10h9l4-5h15q2 0 2 2v20q0 2-2 2H2q-2 0-2-2z" fill="#ffcf48" /><path d="M5 29v-5q0-3 3-3h13q3 0 3 3v5z" fill="#1377c8" /><path d="M9 25h11" stroke="#0a4d8c" strokeWidth="1.500" /></svg></div>
      <div className={c}><svg width="31" height="31" viewBox="0 0 31 31"><defs><linearGradient id="eg"><stop offset="0" stopColor="#1a9be8" /><stop offset=".6" stopColor="#35c5c0" /><stop offset="1" stopColor="#62d84a" /></linearGradient></defs><circle cx="15.500" cy="15.500" r="15" fill="#0c6fc8" /><path d="M1 13C3 4 9 .500 15.500.500c9 0 15 6 15 13c0 5-4 7.500-8 7.500c-3 0-4-1-4-2c0-1 1-1 1-4c0-3-3-6-8-6C7 9 3 11 1 13z" fill="url(#eg)" /><path d="M10 12c-5 4-5 16 5 18.500c6 1 11-2 13.500-6c-6 3-14 1-15-6c0-3 1-5 3-6c-2-2-5-2-6.500-.500z" fill="#114e9c" /><path d="M14 16c2-3 5-2 5 0s-1 2-1 3c0 2 4 4 12 1c0 2-1 4-2 5c-7 3-15 0-14-9z" fill="#202020" /></svg></div>
      <div className={c}><svg width="30" height="30" viewBox="0 0 30 30"><defs><linearGradient id="ff" x1=".8" y1="0" x2=".3" y2="1"><stop offset="0" stopColor="#ffe040" /><stop offset=".5" stopColor="#ff8020" /><stop offset="1" stopColor="#ff1f6a" /></linearGradient></defs><path d="M17 0c2 3 5 4 7 7l1-2c3 4 4 8 4 11c0 8-6 14-14 14S1 24 1 16c0-5 1-8 3-11l2 4c2-2 4-2 6-2c1-3 3-5 5-7z" fill="url(#ff)" /><circle cx="15" cy="15.500" r="6.500" fill="#7a3fe0" /><path d="M4 9c5 1 9 0 11 3c-4 0-4 3-7 3c1 4 5 6 9 5c-5 5-13 1-13-11z" fill="#ff8a1c" /></svg></div>
      <div className={c}>
        <svg width="28" height="28" viewBox="0 0 28 28"><rect width="28" height="28" rx="2" fill="#4a4488" /><rect width="28" height="9" rx="2" fill="#8a80b8" /><path d="M2 4.500h14M2 9.500h6v3h10M2 14.500h14M14 26v-6M18 26v-8M22 26v-9M26 26v-6" stroke="#f4f4ff" strokeWidth="1.500" fill="none" /><path d="M19 7.500h8M20 12.500h6M2 18.500h7M2 23.500h8" stroke="#e8b868" strokeWidth="1.500" /></svg>
        <div className="absolute bottom-[6px] left-[24px] h-1 w-2 rounded-full bg-[#999]" />
      </div>
      <div className={c}>
        <div className="flex h-[50px] w-[50px] items-center justify-center rounded-md border border-[#383838] bg-[#2d2d2d]">
          <svg width="31" height="31" viewBox="0 0 31 31"><rect x="1" y="1" width="22" height="22" rx="2" fill="#f0f0f0" /><path d="M5.500 18V5.500H18" stroke="#d83b01" strokeWidth="3" fill="none" strokeDasharray="3 1.500" /><path d="M18 7v17M8 19h17" stroke="#8c9aa4" strokeWidth="2.500" /><circle cx="27" cy="17" r="2.500" stroke="#1c9be8" strokeWidth="2" fill="none" /><circle cx="17" cy="28" r="2.200" stroke="#1c9be8" strokeWidth="2" fill="none" /></svg>
        </div>
        <div className="absolute bottom-[6px] left-[18px] h-1 w-5 rounded-full bg-[#4cc2ff]" />
      </div>
      <div className="ml-auto flex items-center pr-[24px] text-[14px] leading-5">
        <svg width="16" height="10" fill="none" stroke="#fff" strokeWidth="1.300"><path d="M1 9l7-7l7 7" /></svg>
        <div className="ml-[26px] flex w-4 flex-col items-center"><T w={10} dir="rtl">فا</T><T w={16} className="">FA</T></div>
        <svg width="72" height="24" viewBox="0 0 72 24" fill="none" stroke="#fff" strokeWidth="1.300" className="ml-[29px]">
          <circle cx="10.500" cy="11.500" r="9" /><ellipse cx="10.500" cy="11.500" rx="4" ry="9" /><path d="M2 8h17M2 15h17" /><circle cx="15" cy="16" r="5" fill="#202020" /><path d="M11.500 19.500l7-7" />
        </svg>
        <svg width="21" height="20" viewBox="0 0 21 20" fill="none" stroke="#fff" strokeWidth="1.300" className="-ml-[42px]"><path d="M1 7h3l5-4v14l-5-4H1zM12 7q2 3 0 6M15 5q4 5 0 10M17 2q6 8 0 16" /></svg>
        <svg width="21" height="20" viewBox="0 0 21 20" fill="none" stroke="#fff" strokeWidth="1.300" className="ml-[9px]"><path d="M8 4.500h9v11H7M17 8h3v4h-3" /><path d="M0 4h6v5H0zM1 1h1v3H1zM4 1h1v3H4z" fill="#fff" stroke="none" /><path d="M3 9v7" strokeWidth="1.500" /></svg>
        <div className="ml-[19px] mb-px flex flex-col items-end"><T w={67} dir="rtl">۰۸:۵۶ ب.ظ</T><T w={55}>۱۴۰۰/۱۱/۱۷</T></div>
      </div>
    </div>
  );
}

export default function App() {
  return (
    <div className="flex h-[1080px] w-[1920px] flex-col overflow-hidden bg-[#f0f0f0] font-['Open_Sans','Noto_Sans','DejaVu_Sans',sans-serif] text-black">
      <Title />
      <Menu />
      <Toolbars />
      <div className="flex h-[692px] shrink-0">
        <LeftPanel />
        <Main />
        <Instruments />
      </div>
      <Spreadsheet />
      <Status />
      <Taskbar />
    </div>
  );
}
